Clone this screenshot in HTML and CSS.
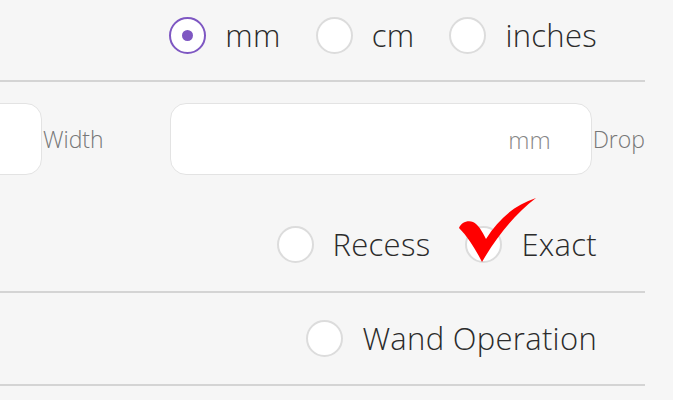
FILE: index.html
```html
<!DOCTYPE html>
<html><head><meta charset="UTF-8">
<link rel="stylesheet" href="styles.css">
</head>
<body>
<div class="form">

  <div class="section units">
    <div class="radio-row">
      <label class="radio"><span class="dot checked"></span>mm</label>
      <label class="radio"><span class="dot"></span>cm</label>
      <label class="radio"><span class="dot"></span>inches</label>
    </div>
  </div>

  <div class="section sizes">
    <div class="field-row">
      <div class="field">
        <div class="box"></div>
        <span class="field-label">Width</span>
      </div>
      <div class="field">
        <div class="box"><span class="unit">mm</span></div>
        <span class="field-label">Drop</span>
      </div>
    </div>
    <div class="radio-row fit">
      <label class="radio"><span class="dot"></span>Recess</label>
      <label class="radio exact">
        <span class="dot"></span>Exact
        <svg class="tick" width="80" height="67" viewBox="0 0 80 67">
          <path d="M1,32 C3,27 9,24 15,26 C20,28 24,35 28,43 C40,24 56,9 78,2 C58,17 39,40 24,66 C18,54 10,41 1,32 Z" fill="#ff0000"/>
        </svg>
      </label>
    </div>
  </div>

  <div class="section wand">
    <div class="radio-row">
      <label class="radio"><span class="dot"></span>Wand Operation</label>
    </div>
  </div>

</div>
</body></html>
```

FILE: styles.css
```css
body {
background-color: #f6f6f6;
color: #333;
font-family: "Open Sans", sans-serif;
margin: 0;
padding: 0;
overflow: hidden;
}

.form {
width: 645px;
}

.section {
border-bottom: 2px solid #d4d4d4;
}

.units {
height: 80px;
}

.units .radio-row {
padding-top: 16px;
}

.sizes {
padding-top: 21px;
height: 188px;
}

.wand {
padding-top: 26px;
height: 65px;
}

.radio-row {
display: flex;
justify-content: flex-end;
gap: 35px;
padding-right: 48px;
}

.radio {
display: flex;
align-items: center;
gap: 19px;
font-size: 31px;
font-weight: 300;
letter-spacing: 0.3px;
color: #2b2b2b;
height: 38px;
position: relative;
}

.dot {
width: 33px;
height: 33px;
border: 2px solid #dcdcdc;
border-radius: 50%;
background-color: #fff;
display: flex;
align-items: center;
justify-content: center;
}

.dot.checked {
border-color: #7e57c2;
}

.dot.checked::after {
content: "";
width: 11px;
height: 11px;
border-radius: 50%;
background-color: #7e57c2;
}

.field-row {
display: flex;
justify-content: flex-end;
gap: 66px;
}

.field {
display: flex;
align-items: center;
gap: 1px;
flex-shrink: 0;
}

.box {
width: 422px;
height: 72px;
border: 1px solid #e3e3e3;
border-radius: 16px;
background-color: #fff;
display: flex;
align-items: center;
justify-content: flex-end;
padding-right: 40px;
box-sizing: border-box;
}

.unit {
font-size: 24px;
font-weight: 300;
color: #888;
}

.field-label {
font-size: 23px;
font-weight: 300;
color: #777;
}

.fit {
margin-top: 50px;
}

/* red tick drawn over the Exact radio */
.tick {
position: absolute;
left: -7px;
top: -29px;
}
```
